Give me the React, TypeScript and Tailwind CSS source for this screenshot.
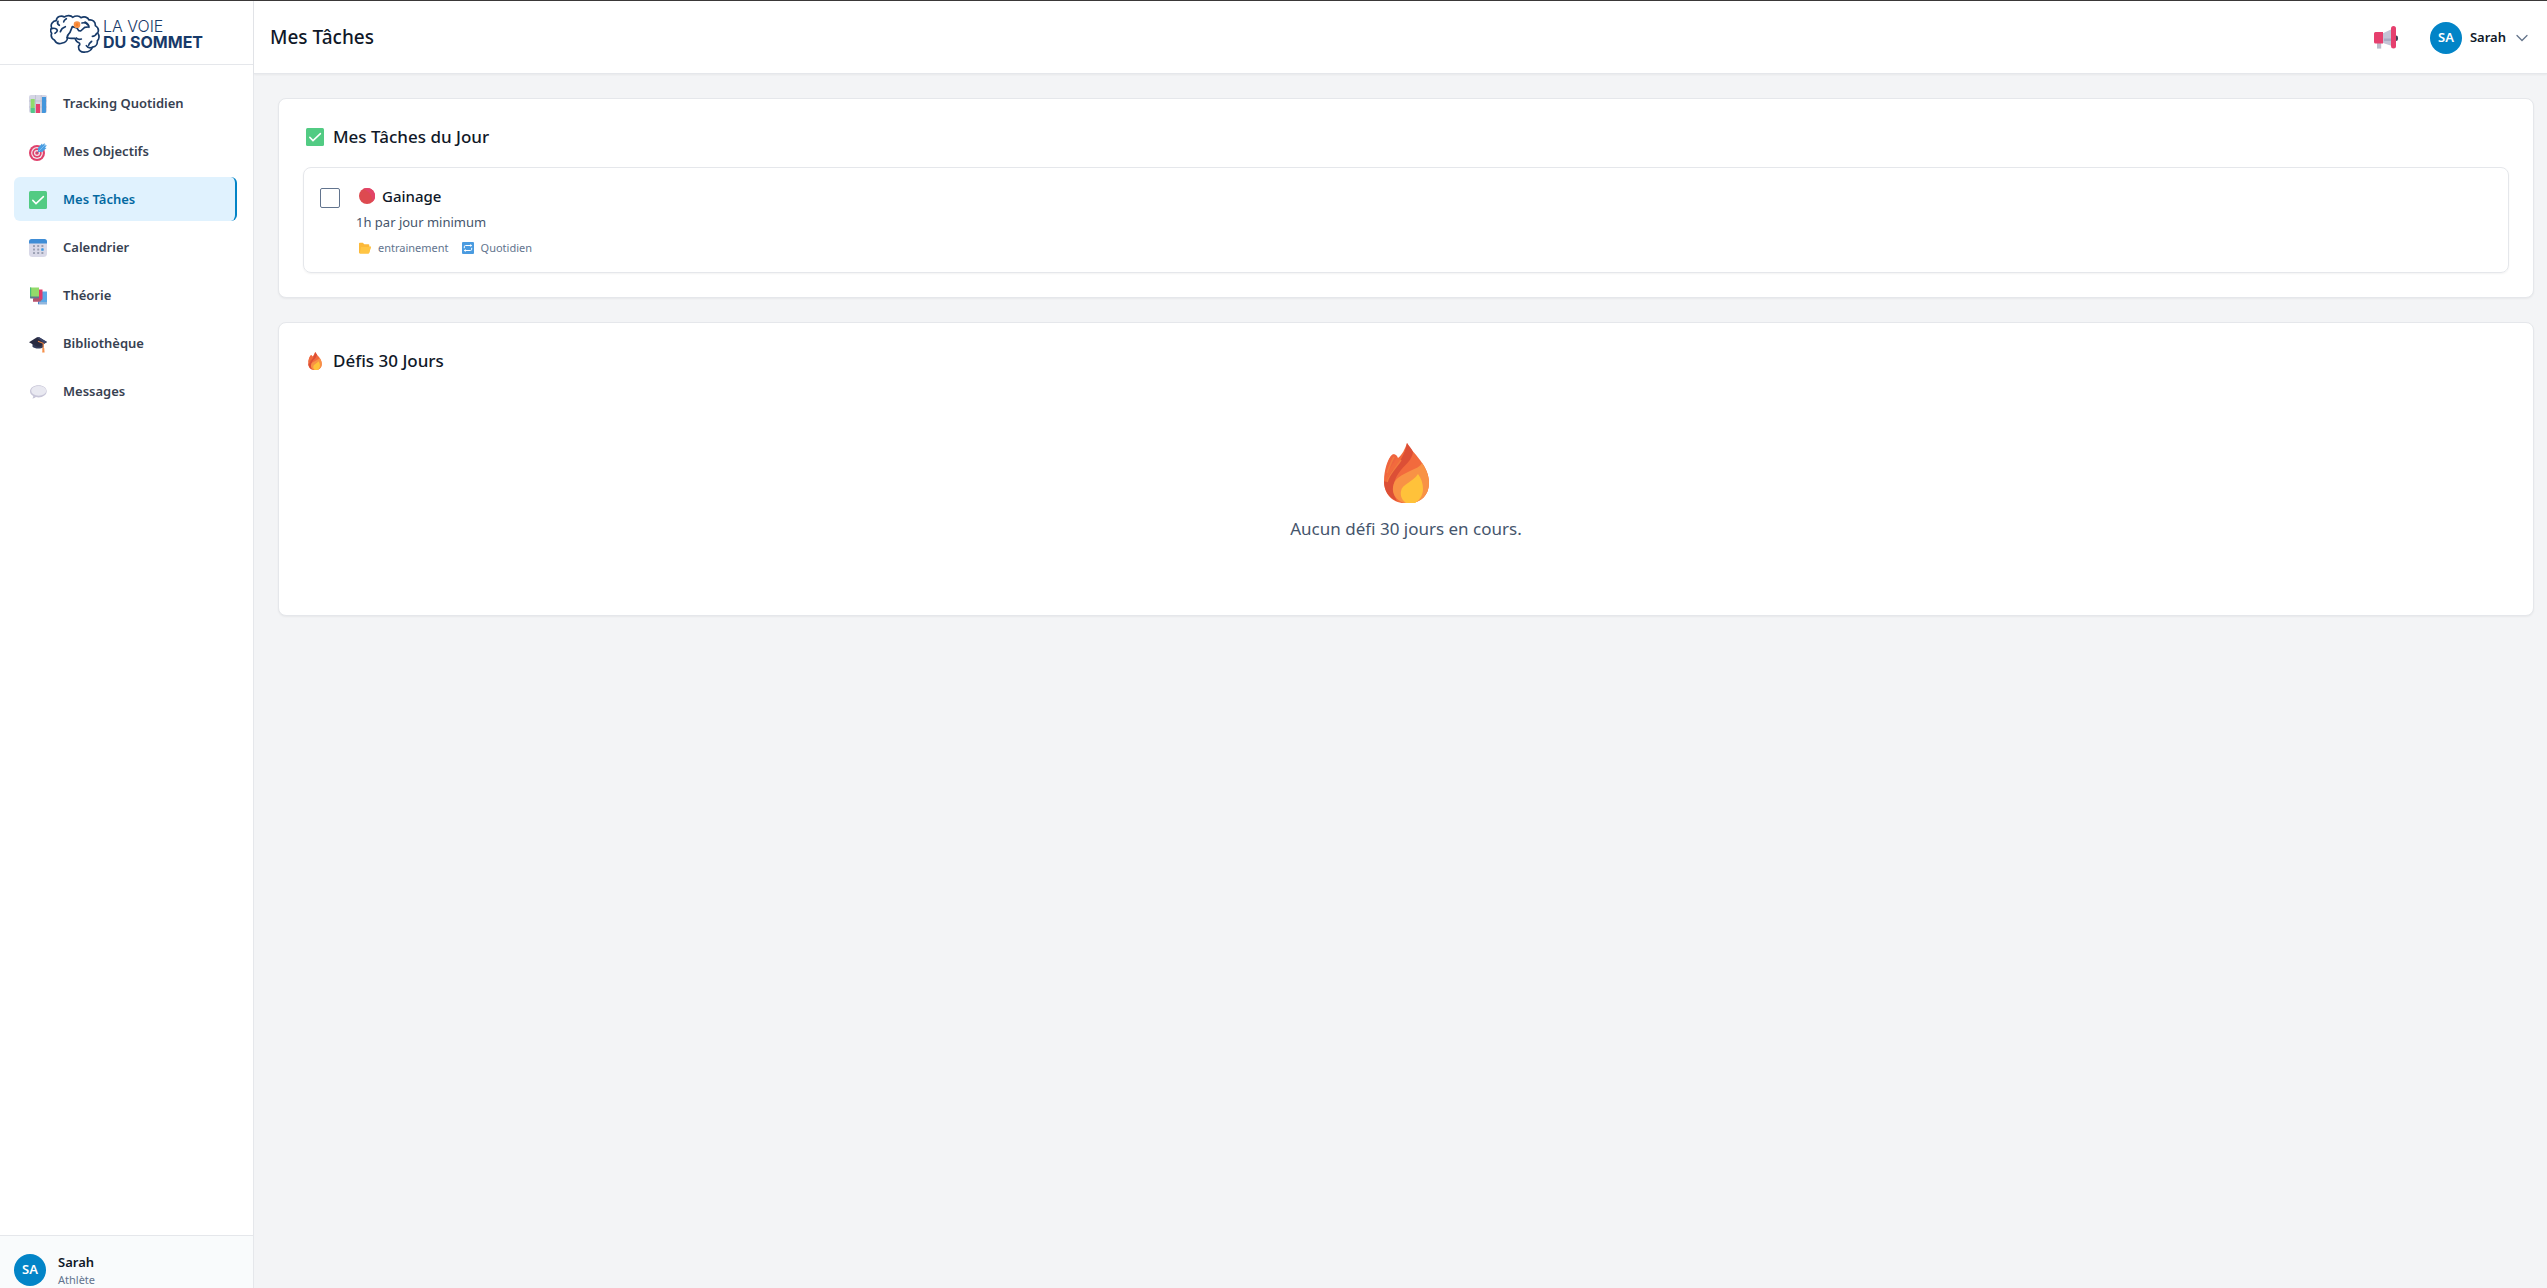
import type { ReactNode } from 'react'

type IconProps = { className?: string }

function CheckIcon({ className }: IconProps) {
  return (
    <svg className={className} viewBox="0 0 18 18" aria-hidden="true">
      <rect width="18" height="18" rx="1.5" fill="#52cb83" />
      <path d="M3.8 9.4 7 12.6l7.4-7" fill="none" stroke="#fff" strokeWidth="1.5" strokeLinecap="round" />
    </svg>
  )
}

function ChartIcon({ className }: IconProps) {
  return (
    <svg className={className} viewBox="0 0 18 18" aria-hidden="true">
      <rect width="18" height="18" rx="2" fill="#d5d6e5" />
      <path d="M0 6h18M0 12h18M6.5 0v18M12.2 0v18" stroke="#b9bacb" strokeWidth=".7" />
      <path d="M1.7 4h4v14H3a1.3 1.3 0 0 1-1.3-1.3z" fill="#8fdc6c" />
      <path d="M1.7 13h4v5H3a1.3 1.3 0 0 1-1.3-1.3z" fill="#52c78c" />
      <path d="M7 9h4v9H7z" fill="#e5416f" />
      <path d="M13 2h4v14.7a1.3 1.3 0 0 1-1.3 1.3H13z" fill="#4396dc" />
    </svg>
  )
}

function TargetIcon({ className }: IconProps) {
  return (
    <svg className={className} viewBox="0 0 18 18" aria-hidden="true">
      <circle cx="8" cy="10" r="8" fill="#e0416c" />
      <circle cx="8" cy="10" r="5.9" fill="#f1e6ec" />
      <circle cx="8" cy="10" r="4.7" fill="#e0416c" />
      <circle cx="8" cy="10" r="3" fill="#f1e6ec" />
      <circle cx="8" cy="10" r="1.8" fill="#e0416c" />
      <path d="m8 10 5-5" stroke="#7d5c8c" strokeWidth="1" />
      <path d="M9 8.5V5l4-4.5.6 1.6L15.5 0l.3 2.2L18 2.5 15.8 4.5l1.7.6L13.2 9H9.8z" fill="#4a9ee2" />
      <path d="m10 8 6.5-6.5" stroke="#8ac7f3" strokeWidth=".8" />
    </svg>
  )
}

function CalendarIcon({ className }: IconProps) {
  const dots = [
    [5, 7], [9.2, 7], [13.4, 7],
    [5, 10.5], [9.2, 10.5],
    [5, 14], [9.2, 14], [13.4, 14],
  ]
  return (
    <svg className={className} viewBox="0 0 18 18" aria-hidden="true">
      <path d="M0 3h18v11.5a3.5 3.5 0 0 1-3.5 3.5h-11A3.5 3.5 0 0 1 0 14.5z" fill="#d9d9e8" />
      <path d="M2.5 0h13A2.5 2.5 0 0 1 18 2.5v2H0v-2A2.5 2.5 0 0 1 2.5 0z" fill="#3f8dd6" />
      {dots.map(([x, y]) => (
        <rect key={`${x}-${y}`} x={x - 1} y={y - 1} width="2" height="2" rx=".5" fill="#9a9fb2" />
      ))}
      <rect x="12.2" y="9.3" width="2.5" height="2.5" rx=".6" fill="#3b97e0" />
    </svg>
  )
}

function BooksIcon({ className }: IconProps) {
  return (
    <svg className={className} viewBox="0 0 18 18" aria-hidden="true">
      <path d="M9 4.5h9V17H9z" fill="#5aa8e6" />
      <path d="M9 15h9v2.3H9z" fill="#4485c8" />
      <path d="M10 15.5h8v1h-8z" fill="#dfe6f2" />
      <path d="M5 2.5h8.5V12l-3.5 2.5H4z" fill="#de3b6a" />
      <path d="M4 12h9.5l-2 2.5H4z" fill="#b0566c" />
      <path d="M1 .5h9V10H1z" fill="#93da6a" />
      <path d="M1 .5h1.2V10H1z" fill="#45bd79" />
      <path d="M1 9.6h9v2H2.2A1.2 1.2 0 0 1 1 10.4z" fill="#5a7b8d" />
    </svg>
  )
}

function CapIcon({ className }: IconProps) {
  return (
    <svg className={className} viewBox="0 0 18 18" aria-hidden="true">
      <path d="M3.5 7v4.8c2 2.2 8.5 2.500 11 .2V7z" fill="#333b58" />
      <path d="M0 7.200 8 2.300h2.200L18 7l-7.500 4.700H8.200z" fill="#282b41" />
      <path d="M8 2.300h2.200L18 7l-3 1.800z" fill="#3b4468" />
      <path d="m9 6.200 5.200 2.100V15" fill="none" stroke="#ef8746" strokeWidth="1.1" />
      <path d="M13.500 13h1.700l.4 4.500h-2.400z" fill="#f5914c" />
    </svg>
  )
}

function BubbleIcon({ className }: IconProps) {
  return (
    <svg className={className} viewBox="0 0 18 18" aria-hidden="true">
      <path d="M9.5 2.3c4.6 0 8.2 2.6 8.2 6s-3.6 6.1-8.2 6.1c-.9 0-1.8-.1-2.6-.3-.9.8-2.1 1.4-3.5 1.3.7-.7.9-1.5.8-2.3C2.2 12 1 10.3 1 8.3c0-3.4 3.9-6 8.5-6z" fill="#c8c6d8" />
      <ellipse cx="9.7" cy="7.8" rx="7.5" ry="4.9" fill="#e9e9f1" />
    </svg>
  )
}

function FireIcon({ className }: IconProps) {
  return (
    <svg className={className} viewBox="0 0 45 60" aria-hidden="true">
      <path d="M23 0c2 5 8 10 13 17 6 8 9 15 9 23 0 12-8 20-19 20h-6C8 60 0 50 0 38c0-11 4-23 8-26 2-2 5 0 6 3 4-3 7-9 9-15z" fill="#f26a3d" />
      <path d="M23 0c2 3 5 6 6 9-1 8-7 12-12 18-6 7-9 16-7 25l3 6C5 55 0 48 0 38c2 2 3 0 4-3 3-8 10-12 13-19 3-5 5-10 6-16z" fill="#dc4f36" />
      <path d="M8 12c2-1 4 0 5 2C10 20 4 27 1 36c0-9 3-20 7-24z" fill="#ee6440" />
      <path d="M10 14C7 19 5 25 3 30M17 17C12 25 5 31 3 39" fill="none" stroke="#f2793f" strokeWidth="1.5" />
      <path d="M38 20c5 7 7 14 7 20 0 12-8 20-19 20h-6C12 57 8 51 9 44c1-9 9-12 17-16 6-3 10-4 12-8z" fill="#f89245" />
      <path d="M34 31c3 4 5 9 5 15 0 6-3 11-8 14h-9c-4-3-6-7-5-12 1-7 12-9 17-17z" fill="#ffc23a" />
    </svg>
  )
}

function MegaphoneIcon({ className }: IconProps) {
  return (
    <svg className={className} viewBox="0 0 24 24" aria-hidden="true">
      <rect x="20" y="9.5" width="4" height="5.5" rx="2" fill="#3f4258" />
      <path d="M3 17h4.2v5.6H3z" fill="#bcbccb" />
      <path d="M9 7.2 18 3v17l-9-3z" fill="#c3c4d6" />
      <path d="M10 12.5h7V15h-7z" fill="#a8abc2" />
      <path d="M1.5 6H9v11.5H1.5A1.5 1.5 0 0 1 0 16V7.5A1.5 1.5 0 0 1 1.5 6z" fill="#e6406e" />
      <rect x="17" width="5" height="22.5" rx="2.5" fill="#e6406e" />
    </svg>
  )
}

function RedDotIcon({ className }: IconProps) {
  return (
    <svg className={className} viewBox="0 0 16 16" aria-hidden="true">
      <circle cx="8" cy="8" r="8" fill="#dd4a50" />
      <path d="M8 0a8 8 0 0 1 5.7 13.7C13 7 10 3 4 1c1.2-.6 2.5-1 4-1z" fill="#e24468" />
    </svg>
  )
}

function FolderIcon({ className }: IconProps) {
  return (
    <svg className={className} viewBox="0 0 12 12" aria-hidden="true">
      <path d="M0 1.5A.8.8 0 0 1 .8.7h3L5.3 2.3h4.2a.8.8 0 0 1 .8.8v1.4H12l-1.8 6.2a1 1 0 0 1-1 .7H.8a.8.8 0 0 1-.8-.8z" fill="#fcb93a" />
      <path d="M2 5h10l-1.8 5.7a1 1 0 0 1-1 .7H.8z" fill="#ffc544" />
    </svg>
  )
}

function RepeatIcon({ className }: IconProps) {
  return (
    <svg className={className} viewBox="0 0 12 12" aria-hidden="true">
      <rect width="12" height="12" rx="1" fill="#4a9be0" />
      <path d="M2.3 6.2V4.8a1.3 1.3 0 0 1 1.3-1.3h5.7M9.7 5.800v1.400a1.3 1.3 0 0 1-1.3 1.3H2.7" fill="none" stroke="#fff" strokeWidth="1" />
      <path d="m8.3 2 1.900 1.500L8.3 5zM3.7 7 1.8 8.5 3.7 10z" fill="#fff" />
    </svg>
  )
}

function BrainLogo() {
  return (
    <svg className="h-10 w-[50px] shrink-0" viewBox="147 40 150 120" fill="none" stroke="#173a69" strokeWidth="5" strokeLinecap="round" strokeLinejoin="round" aria-hidden="true">
      <path d="M152 82c-5-12 4-21 14-22 0-13 15-17 24-11 8-6 20-5 25 1 9-6 20-5 25 1 9-5 21-2 24 7 11-2 20 6 19 17 8 5 11 14 7 22 6 8 5 18-1 23 1 10-5 18-14 19-4 9-12 15-22 15-13 3-22-6-20-18 4-3 4-6 2-9-7-2-11-8-13-14h-11c-6 0-9-1-12-2 1 10-8 15-15 16-10 4-19 0-23-8-9-5-12-13-9-21-4-6-4-12 0-16z" />
      <path d="M171 62c-3 5-1 9 4 12M196 54c-5 3-8 6-8 10M152 84c7-2 15 0 17 5 0 5-3 7-7 9M193 78c-9 3-13 8-15 15" />
      <path d="M198 111c1-8 4-11 9-16l7-17 14 4 5 8 6 1 12-11 10-1" />
      <path d="M243 67c8-2 14 0 17 6M252 64c8 4 12 9 12 16M287 98c-3 6-8 9-13 9M272 122c-5 4-9 7-9 12M275 140c-8 3-16 0-19-5M241 115c-6 2-12 0-15-3" />
      <circle cx="228" cy="72" r="10" fill="#f79248" stroke="none" />
      <circle cx="228" cy="72" r="4" fill="#fb7d20" stroke="none" />
    </svg>
  )
}

const navItems = [
  { label: 'Tracking Quotidien', Icon: ChartIcon },
  { label: 'Mes Objectifs', Icon: TargetIcon },
  { label: 'Mes Tâches', Icon: CheckIcon, active: true },
  { label: 'Calendrier', Icon: CalendarIcon },
  { label: 'Théorie', Icon: BooksIcon },
  { label: 'Bibliothèque', Icon: CapIcon },
  { label: 'Messages', Icon: BubbleIcon },
]

function Avatar() {
  return (
    <span className="flex size-8 shrink-0 items-center justify-center rounded-full bg-[#0284c7] text-[13px] font-semibold text-white">
      SA
    </span>
  )
}

function Sidebar() {
  return (
    <aside className="flex w-[254px] shrink-0 flex-col border-r border-gray-200 bg-white">
      <a href="#accueil" className="flex h-16 shrink-0 items-center justify-center gap-[3px] border-b border-gray-200 pt-0.5 font-['Inter',sans-serif] text-[16px] leading-4 text-[#173a69]">
        <BrainLogo />
        <span className="flex flex-col">
          <span className="font-light">LA VOIE</span>
          <span className="font-bold">DU SOMMET</span>
        </span>
      </a>
      <nav className="flex flex-1 flex-col gap-1 py-4 pr-4 pl-3.5">
        {navItems.map(({ label, Icon, active }) => (
          <a
            key={label}
            href="#page"
            aria-current={active ? 'page' : undefined}
            className={
              active
                ? 'flex h-11 items-center gap-4 rounded-md border-r-2 border-[#0284c7] bg-[#e0f2fe] pt-px pl-[15px] text-[13px] font-semibold text-[#0369a1]'
                : 'flex h-11 items-center gap-4 rounded-md pt-px pl-[15px] text-[13px] font-semibold text-[#374151]'
            }
          >
            <Icon className="size-[18px] shrink-0" />
            {label}
          </a>
        ))}
      </nav>
      <div className="flex items-center gap-3 border-t border-gray-200 bg-[#f9fbfc] pt-4 pl-3.5">
        <Avatar />
        <div>
          <p className="text-[13px] leading-5 font-semibold text-gray-900">Sarah</p>
          <p className="text-[11px] leading-4 text-slate-500">Athlète</p>
        </div>
      </div>
    </aside>
  )
}

function Card({ icon, title, children }: { icon: ReactNode; title: string; children: ReactNode }) {
  return (
    <section className="rounded-lg border border-gray-200 bg-white p-6 shadow-xs">
      <h2 className="mb-4 flex items-center gap-[9px] pl-[3px] text-[17px] leading-7 font-medium text-gray-900">
        {icon}
        {title}
      </h2>
      {children}
    </section>
  )
}

export default function App() {
  return (
    <div className="flex h-screen overflow-hidden border-t border-[#3a3838] bg-gray-100 font-['Noto_Sans','Open_Sans',sans-serif]">
      <Sidebar />
      <div className="flex min-w-0 flex-1 flex-col">
        <header className="flex h-[73px] shrink-0 items-center justify-between border-b border-gray-200 bg-white pt-px pr-[19px] pl-4 shadow-xs">
          <h1 className="text-[19px] font-medium text-gray-900">Mes Tâches</h1>
          <div className="flex items-center gap-8">
            <button type="button" aria-label="Annonces">
              <MegaphoneIcon className="size-6" />
            </button>
            <button type="button" className="flex items-center gap-2 text-[13px] font-semibold text-gray-900">
              <Avatar />
              Sarah
              <svg className="ml-0.5 size-3" viewBox="0 0 12 12" fill="none" stroke="#64748b" strokeWidth="1.3" strokeLinecap="round" aria-hidden="true">
                <path d="m1 3.5 5 5 5-5" />
              </svg>
            </button>
          </div>
        </header>
        <main className="flex flex-col gap-6 py-6 pr-[13px] pl-6">
          <Card icon={<CheckIcon className="size-[18px]" />} title="Mes Tâches du Jour">
            <div className="flex gap-4 rounded-lg border border-gray-200 p-4 shadow-xs">
              <input
                id="gainage"
                type="checkbox"
                className="mt-1 size-5 shrink-0 appearance-none rounded-xs border border-slate-500 bg-white checked:bg-[#0284c7]"
              />
              <div>
                <label htmlFor="gainage" className="flex items-center gap-[7px] pl-[3px] text-[15px] leading-6 font-medium text-gray-900">
                  <RedDotIcon className="size-4" />
                  Gainage
                </label>
                <p className="mt-1 text-[13px] leading-5 text-slate-600">1h par jour minimum</p>
                <div className="mt-2 flex gap-[13px] pl-[3px] text-[11px] leading-4 text-slate-500">
                  <span className="flex items-center gap-[7px]">
                    <FolderIcon className="size-3" />
                    entrainement
                  </span>
                  <span className="flex items-center gap-[7px]">
                    <RepeatIcon className="size-3" />
                    Quotidien
                  </span>
                </div>
              </div>
            </div>
          </Card>
          <Card icon={<FireIcon className="size-[18px]" />} title="Défis 30 Jours">
            <div className="flex flex-col items-center pt-[52px] pb-12">
              <FireIcon className="h-[60px] w-[45px]" />
              <p className="mt-3 text-[17px] leading-7 text-slate-600">Aucun défi 30 jours en cours.</p>
            </div>
          </Card>
        </main>
      </div>
    </div>
  )
}
